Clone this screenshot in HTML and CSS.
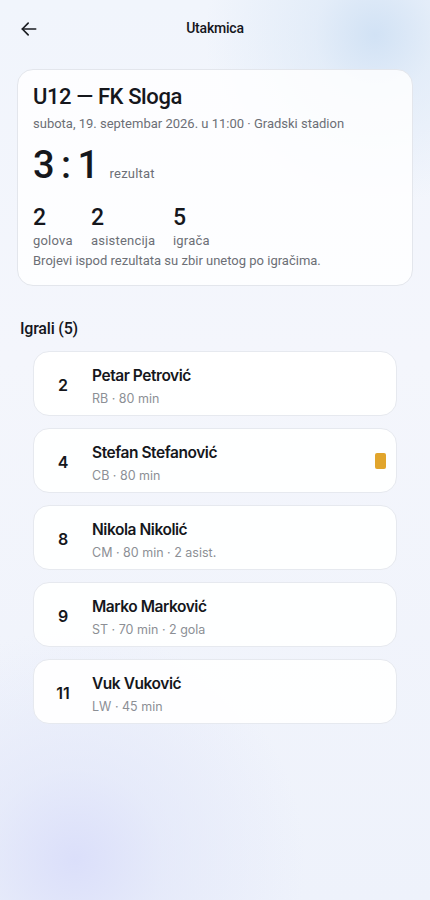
FILE: index.html
```html
<!DOCTYPE html>
<html lang="sr">
<head>
    <meta charset="UTF-8">
    <meta name="viewport" content="width=device-width, initial-scale=1.0">
    <title>Utakmica</title>
    <link rel="stylesheet" href="styles.css">
</head>
<body>
    <div class="page">
        <header class="topbar">
            <button class="back" aria-label="Nazad">
                <svg width="20" height="20" viewBox="0 0 24 24" fill="none" stroke="#1b1d22" stroke-width="2" stroke-linecap="round" stroke-linejoin="round">
                    <path d="M20 12H4"/>
                    <path d="M11 5l-7 7 7 7"/>
                </svg>
            </button>
            <h1>Utakmica</h1>
        </header>

        <div class="match-card">
            <h2>U12 — FK Sloga</h2>
            <div class="when">subota, 19. septembar 2026. u 11:00 · Gradski stadion</div>
            <div class="score">
                <span class="score-num">3 : 1</span>
                <span class="score-label">rezultat</span>
            </div>
            <div class="stats">
                <div class="stat"><strong>2</strong><span>golova</span></div>
                <div class="stat"><strong>2</strong><span>asistencija</span></div>
                <div class="stat"><strong>5</strong><span>igrača</span></div>
            </div>
            <div class="note">Brojevi ispod rezultata su zbir unetog po igračima.</div>
        </div>

        <h3 class="section-title">Igrali (5)</h3>

        <div class="players">
            <div class="player">
                <div class="num">2</div>
                <div class="info"><div class="name">Petar Petrović</div><div class="meta">RB · 80 min</div></div>
            </div>
            <div class="player">
                <div class="num">4</div>
                <div class="info"><div class="name">Stefan Stefanović</div><div class="meta">CB · 80 min</div></div>
                <div class="yellow-card"></div>
            </div>
            <div class="player">
                <div class="num">8</div>
                <div class="info"><div class="name">Nikola Nikolić</div><div class="meta">CM · 80 min · 2 asist.</div></div>
            </div>
            <div class="player">
                <div class="num">9</div>
                <div class="info"><div class="name">Marko Marković</div><div class="meta">ST · 70 min · 2 gola</div></div>
            </div>
            <div class="player">
                <div class="num">11</div>
                <div class="info"><div class="name">Vuk Vuković</div><div class="meta">LW · 45 min</div></div>
            </div>
        </div>
    </div>
</body>
</html>
```

FILE: styles.css
```css
html, body {
    margin: 0;
    padding: 0;
}

body {
    font-family: Roboto, "Noto Sans", sans-serif;
    color: #15171c;
    min-height: 900px;
    background:
        radial-gradient(circle at 375px 35px, rgba(206, 224, 244, 0.9) 0, rgba(216, 230, 246, 0.55) 60px, rgba(236, 242, 251, 0) 170px),
        radial-gradient(circle at 75px 860px, rgba(218, 222, 250, 0.95) 0, rgba(224, 229, 249, 0.6) 90px, rgba(236, 240, 251, 0) 230px),
        linear-gradient(180deg, #f1f5fc 0%, #f4f6fc 40%, #eef2fb 100%);
}

.page {
    padding: 0 17px 40px;
}

.topbar {
    position: relative;
    height: 56px;
    display: flex;
    align-items: center;
    justify-content: center;
}

.back {
    position: absolute;
    left: 1px;
    top: 18px;
    width: 22px;
    height: 22px;
    padding: 0;
    border: none;
    background: none;
    display: flex;
    align-items: center;
    justify-content: center;
}

.topbar h1 {
    margin: 0;
    font-size: 14px;
    font-weight: 500;
    letter-spacing: -0.2px;
}

.match-card {
    margin-top: 13px;
    padding: 12px 15px 15px;
    border: 1px solid #e3e6ec;
    border-radius: 16px;
    background: rgba(255, 255, 255, 0.82);
}

.match-card h2 {
    margin: 0;
    font-size: 22px;
    font-weight: 500;
    letter-spacing: -0.4px;
    line-height: 30px;
}

.when {
    margin-top: 3px;
    font-size: 13px;
    color: #6c6f76;
    line-height: 18px;
}

.score {
    margin-top: 8px;
    display: flex;
    align-items: baseline;
    gap: 12px;
}

.score-num {
    font-size: 38px;
    font-weight: 500;
    letter-spacing: -1.5px;
    line-height: 48px;
}

.score-label {
    font-size: 13px;
    color: #6c6f76;
    letter-spacing: 0.2px;
}

.stats {
    margin-top: 15px;
    display: flex;
}

.stat {
    display: flex;
    flex-direction: column;
}

.stat:nth-child(1) { width: 58px; }
.stat:nth-child(2) { width: 82px; }

.stat strong {
    font-size: 23px;
    font-weight: 500;
    line-height: 28px;
}

.stat span {
    font-size: 13px;
    color: #6c6f76;
    letter-spacing: 0.2px;
    line-height: 18px;
}

.note {
    margin-top: 2px;
    font-size: 13px;
    color: #6c6f76;
    line-height: 18px;
}

.section-title {
    margin: 32px 0 11px 3px;
    font-size: 16px;
    font-weight: 500;
    letter-spacing: -0.2px;
    line-height: 22px;
}

.players {
    display: flex;
    flex-direction: column;
    gap: 12px;
    padding: 0 16px;
}

.player {
    height: 63px;
    display: flex;
    align-items: center;
    padding: 0 10px 0 0;
    border: 1px solid #e6e9ef;
    border-radius: 16px;
    background: rgba(255, 255, 255, 0.92);
    font-family: Inter, Roboto, sans-serif;
}

.num {
    width: 58px;
    padding-top: 2px;
    text-align: center;
    font-size: 16px;
    font-weight: 600;
}

.info {
    flex: 1;
    padding-top: 4px;
}

.name {
    font-size: 15.5px;
    font-weight: 600;
    letter-spacing: -0.45px;
    line-height: 22px;
}

.meta {
    margin-top: 3px;
    font-size: 12.5px;
    color: #8c8f95;
    line-height: 17px;
}

.yellow-card {
    width: 11px;
    height: 16px;
    border-radius: 2px;
    background: #e1a52c;
}
```
